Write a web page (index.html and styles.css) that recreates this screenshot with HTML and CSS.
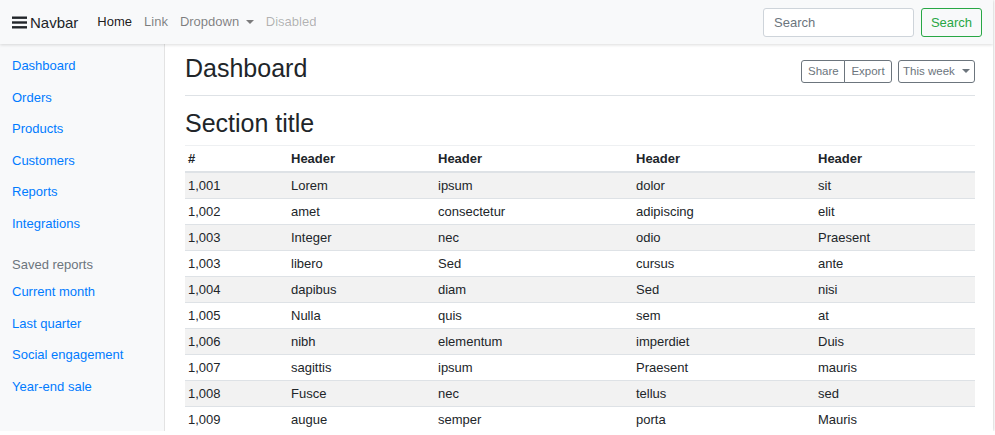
FILE: index.html
```html
<!DOCTYPE html>
<html>
<head>
<meta charset="utf-8">
<link rel="stylesheet" href="styles.css">
</head>
<body>
<div class="frame">
  <nav class="navbar">
    <a class="brand" href="#">
      <svg class="burger" width="15" height="13" viewBox="0 0 15 13"><rect x="0" y="0.5" width="15" height="2.4" fill="#212529"/><rect x="0" y="5.3" width="15" height="2.4" fill="#212529"/><rect x="0" y="10.1" width="15" height="2.4" fill="#212529"/></svg>
      <span>Navbar</span>
    </a>
    <ul class="nav">
      <li><a class="nav-link active" href="#">Home</a></li>
      <li><a class="nav-link" href="#">Link</a></li>
      <li><a class="nav-link" href="#">Dropdown <span class="caret"></span></a></li>
      <li><a class="nav-link disabled" href="#">Disabled</a></li>
    </ul>
    <form class="search">
      <input class="search-input" type="text" placeholder="Search">
      <button class="search-btn" type="button">Search</button>
    </form>
  </nav>
  <div class="body">
    <aside class="sidebar">
      <a class="side-link" href="#">Dashboard</a>
      <a class="side-link" href="#">Orders</a>
      <a class="side-link" href="#">Products</a>
      <a class="side-link" href="#">Customers</a>
      <a class="side-link" href="#">Reports</a>
      <a class="side-link" href="#">Integrations</a>
      <div class="side-heading">Saved reports</div>
      <a class="side-link" href="#">Current month</a>
      <a class="side-link" href="#">Last quarter</a>
      <a class="side-link" href="#">Social engagement</a>
      <a class="side-link" href="#">Year-end sale</a>
    </aside>
    <main class="main">
      <div class="page-head">
        <h1 class="title">Dashboard</h1>
        <div class="toolbar">
          <div class="btn-group">
            <button class="btn">Share</button>
            <button class="btn">Export</button>
          </div>
          <button class="btn week">This week <span class="caret"></span></button>
        </div>
      </div>
      <h2 class="section-title">Section title</h2>
      <table class="table">
        <colgroup><col class="c1"><col class="c2"><col class="c3"><col class="c4"><col class="c5"></colgroup>
        <thead>
          <tr><th>#</th><th>Header</th><th>Header</th><th>Header</th><th>Header</th></tr>
        </thead>
        <tbody>
          <tr><td>1,001</td><td>Lorem</td><td>ipsum</td><td>dolor</td><td>sit</td></tr>
          <tr><td>1,002</td><td>amet</td><td>consectetur</td><td>adipiscing</td><td>elit</td></tr>
          <tr><td>1,003</td><td>Integer</td><td>nec</td><td>odio</td><td>Praesent</td></tr>
          <tr><td>1,003</td><td>libero</td><td>Sed</td><td>cursus</td><td>ante</td></tr>
          <tr><td>1,004</td><td>dapibus</td><td>diam</td><td>Sed</td><td>nisi</td></tr>
          <tr><td>1,005</td><td>Nulla</td><td>quis</td><td>sem</td><td>at</td></tr>
          <tr><td>1,006</td><td>nibh</td><td>elementum</td><td>imperdiet</td><td>Duis</td></tr>
          <tr><td>1,007</td><td>sagittis</td><td>ipsum</td><td>Praesent</td><td>mauris</td></tr>
          <tr><td>1,008</td><td>Fusce</td><td>nec</td><td>tellus</td><td>sed</td></tr>
          <tr><td>1,009</td><td>augue</td><td>semper</td><td>porta</td><td>Mauris</td></tr>
        </tbody>
      </table>
    </main>
  </div>
</div>
</body>
</html>
```
FILE: styles.css
```css
* { box-sizing: border-box; }
html, body { margin: 0; padding: 0; background: #fff; }
body {
  font-family: "Liberation Sans", Arial, sans-serif;
  font-size: 13px;
  color: #212529;
  overflow: hidden;
}
a { text-decoration: none; }

.frame {
  width: 993px;
  height: 431px;
  overflow: hidden;
  display: flex;
  flex-direction: column;
  box-shadow: 0 0 3px rgba(0,0,0,.28);
  position: relative;
}

/* navbar */
.navbar {
  height: 44px;
  flex: none;
  display: flex;
  align-items: center;
  padding: 0 11px 0 12px;
  background: #f8f9fa;
  box-shadow: 0 1px 3px rgba(0,0,0,.14);
  position: relative;
  z-index: 2;
}
.brand {
  display: flex;
  align-items: center;
  gap: 3px;
  color: #212529;
  font-size: 15px;
  margin-right: 13px;
}
.burger { display: block; }
.nav {
  list-style: none;
  margin: 0;
  padding: 0;
  display: flex;
}
.nav-link {
  display: block;
  padding: 0 6px;
  color: rgba(0,0,0,.5);
  line-height: 16px;
}
.nav-link.active { color: rgba(0,0,0,.9); }
.nav-link.disabled { color: rgba(0,0,0,.3); }
.caret {
  display: inline-block;
  width: 0;
  height: 0;
  margin-left: 3px;
  vertical-align: 2px;
  border-top: 4px solid currentColor;
  border-left: 4px solid transparent;
  border-right: 4px solid transparent;
}
.search {
  margin-left: auto;
  display: flex;
  gap: 7px;
}
.search-input {
  width: 151px;
  height: 29px;
  border: 1px solid #ced4da;
  border-radius: 3px;
  padding: 0 10px;
  font-family: inherit;
  font-size: 13px;
  color: #495057;
  background: #fff;
}
.search-input::placeholder { color: #6c757d; }
.search-btn {
  width: 61px;
  height: 29px;
  border: 1px solid #28a745;
  border-radius: 3px;
  background: transparent;
  color: #28a745;
  font-family: inherit;
  font-size: 13px;
  padding: 0;
}

/* body */
.body {
  flex: 1;
  display: flex;
  min-height: 0;
}
.sidebar {
  width: 165px;
  flex: none;
  background: #f8f9fa;
  border-right: 1px solid #e3e3e3;
  padding-top: 6px;
  display: flex;
  flex-direction: column;
}
.side-link {
  display: block;
  padding: 8px 12px;
  line-height: 15.5px;
  color: #007bff;
}
.side-heading {
  padding: 18px 12px 4px;
  line-height: 15px;
  color: #6c757d;
}

.main {
  flex: 1;
  min-width: 0;
  padding: 0 18px 0 20px;
}
.page-head {
  display: flex;
  justify-content: space-between;
  align-items: flex-start;
  padding-top: 9px;
  padding-bottom: 12px;
  border-bottom: 1px solid #dee2e6;
}
.title {
  margin: 0;
  font-size: 25px;
  line-height: 30px;
  font-weight: 500;
  color: #212529;
}
.toolbar {
  display: flex;
  gap: 6px;
  margin-top: 7px;
}
.btn-group { display: flex; }
.btn {
  height: 23px;
  border: 1px solid #6c757d;
  background: #fff;
  color: #6c757d;
  font-family: inherit;
  font-size: 11.5px;
  padding: 0 6px;
  border-radius: 3px;
  line-height: 21px;
  white-space: nowrap;
}
.btn-group .btn:first-child { border-radius: 3px 0 0 3px; width: 44px; }
.btn-group .btn:last-child { border-radius: 0 3px 3px 0; margin-left: -1px; width: 48px; }
.btn.week { width: 77px; padding: 0 4px; }
.btn.week .caret { margin-left: 4px; vertical-align: 2px; }

.section-title {
  margin: 12px 0 7px;
  font-size: 25px;
  line-height: 30px;
  font-weight: 500;
}

.table {
  width: 100%;
  border-collapse: collapse;
  table-layout: fixed;
}
.c1 { width: 103px; }
.c2 { width: 147px; }
.c3 { width: 198px; }
.c4 { width: 182px; }
.c5 { width: auto; }
.table th, .table td {
  text-align: left;
  padding: 5px 3px;
  line-height: 15px;
  border-top: 1px solid #dee2e6;
  white-space: nowrap;
}
.table th {
  font-weight: bold;
  border-top-color: #eef0f2;
  border-bottom: 2px solid #dee2e6;
}
.table tbody tr:nth-child(odd) { background: #f2f2f2; }
```
